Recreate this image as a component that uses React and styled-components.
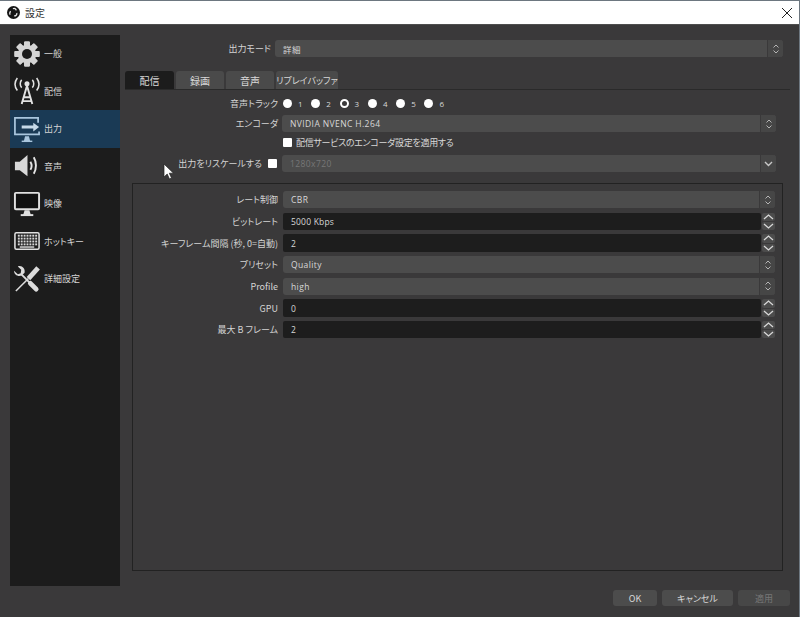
import styled, { createGlobalStyle } from 'styled-components';

const GlobalStyle = createGlobalStyle`
  html, body {
    margin: 0;
    padding: 0;
    background: #3a393a;
  }
  * {
    box-sizing: border-box;
  }
`;

const Window = styled.div`
  position: relative;
  width: 800px;
  height: 617px;
  display: flex;
  flex-direction: column;
  overflow: hidden;
  background: #3a393a;
  border-top: 1px solid #6d7780;
  border-right: 1px solid #6d7780;
  color: #d8d8d8;
  font-family: "Noto Sans CJK JP", "Open Sans", sans-serif;
  font-size: 9px;
  font-feature-settings: "palt";
`;

const TitleBar = styled.div`
  height: 24px;
  flex: none;
  display: flex;
  align-items: center;
  padding: 0 6px 0 7px;
  background: #ffffff;
  border-bottom: 1px solid #4e4e4e;
  color: #333333;
  font-size: 10px;
  gap: 5px;
`;

const TitleText = styled.span`
  flex: 1;
`;

const Body = styled.div`
  flex: 1;
  display: flex;
  padding: 10px 9px 10px 10px;
  gap: 5px;
`;

const Sidebar = styled.nav`
  width: 110px;
  height: 551px;
  flex: none;
  background: #1c1c1c;
`;

const NavItem = styled.div`
  height: 37.5px;
  display: flex;
  align-items: center;
  gap: 3px;
  padding-left: 3px;
  background: ${(p) => (p.$active ? '#1a3a55' : 'transparent')};
  color: #d4d4d4;
  font-size: 9px;
`;

const NavIcon = styled.svg`
  width: 28px;
  height: 28px;
  flex: none;
`;

const ModeRow = styled.div`
  display: flex;
  align-items: center;
  height: 17px;
  margin-top: 5px;
  padding-right: 7px;
`;

const Main = styled.div`
  flex: 1;
  display: flex;
  flex-direction: column;
  min-width: 0;
`;

const TabBar = styled.div`
  display: flex;
  align-items: flex-end;
  gap: 2px;
  height: 18px;
  margin-top: 14px;
  flex: none;
`;

const Tab = styled.div`
  width: ${(p) => p.$w}px;
  height: 18px;
  display: flex;
  align-items: center;
  justify-content: center;
  border-radius: 3px 3px 0 0;
  background: ${(p) => (p.$active ? '#1c1c1c' : '#4a4a4a')};
  color: #d8d8d8;
  font-size: ${(p) => p.$fs || 10}px;
  white-space: nowrap;
`;

const TabLine = styled.div`
  height: 1px;
  background: #2a2a2a;
  flex: none;
`;

const TopForm = styled.div`
  display: flex;
  flex-direction: column;
  padding: 6px 14px 0 0;
`;

const Row = styled.div`
  display: flex;
  align-items: center;
  height: ${(p) => p.$h || 17}px;
  margin-top: ${(p) => p.$mt || 0}px;
`;

const Label = styled.div`
  width: ${(p) => p.$w || 153}px;
  flex: none;
  display: flex;
  align-items: center;
  justify-content: flex-end;
  gap: 6px;
  margin-right: 4px;
  padding-right: ${(p) => p.$pr || 0}px;
  color: #d4d4d4;
  font-size: 9px;
  white-space: nowrap;
`;

const Radios = styled.div`
  display: flex;
  align-items: center;
  padding-left: 1px;
`;

const RadioItem = styled.label`
  width: 28.3px;
  display: flex;
  align-items: center;
  gap: 6px;
  font-family: "Open Sans", sans-serif;
  font-size: 8px;
`;

const RadioDot = styled.span`
  width: 9px;
  height: 9px;
  border-radius: 50%;
  background: ${(p) => (p.$on ? '#3a393a' : '#ffffff')};
  border: ${(p) => (p.$on ? '2px solid #ffffff' : 'none')};
`;

const Check = styled.span`
  width: 9px;
  height: 9px;
  flex: none;
  background: #ffffff;
  border-radius: 1px;
`;

const CheckText = styled.div`
  display: flex;
  align-items: center;
  gap: 4px;
  padding-left: 1px;
  font-size: 9px;
  letter-spacing: -0.3px;
`;

const Combo = styled.div`
  flex: ${(p) => (p.$w ? 'none' : 1)};
  width: ${(p) => (p.$w ? `${p.$w}px` : 'auto')};
  height: 17px;
  display: flex;
  border-radius: 3px;
  overflow: hidden;
  background: #4c4c4c;
  color: ${(p) => (p.$disabled ? '#777777' : '#d8d8d8')};
`;

const ComboText = styled.div`
  flex: 1;
  display: flex;
  align-items: center;
  padding-left: 8px;
  font-family: "Open Sans", "Noto Sans CJK JP", sans-serif;
  font-size: 8.5px;
  letter-spacing: 0.4px;
`;

const ComboArrow = styled.div`
  width: 16px;
  flex: none;
  display: flex;
  align-items: center;
  justify-content: center;
  background: #464646;
  border-left: 1px solid #3a393a;
`;

const Group = styled.div`
  width: 651px;
  height: 388px;
  margin: 11px 0 0 7px;
  padding: 7px 7px 0 0;
  display: flex;
  flex-direction: column;
  gap: 4.17px;
  border: 1px solid #222222;
`;

const GroupLabel = styled(Label)`
  width: 145px;
  margin-right: 5px;
`;

const Spin = styled.div`
  flex: 1;
  height: 17.5px;
  display: flex;
  gap: 1px;
`;

const SpinInput = styled.div`
  flex: 1;
  display: flex;
  align-items: center;
  padding-left: 8px;
  border-radius: 2px;
  background: #1d1d1d;
  color: #d8d8d8;
  font-family: "Open Sans", sans-serif;
  font-size: 8.5px;
  letter-spacing: 0.2px;
`;

const SpinButtons = styled.div`
  width: 13px;
  flex: none;
  display: flex;
  flex-direction: column;
  gap: 1px;
`;

const SpinButton = styled.div`
  flex: 1;
  display: flex;
  align-items: center;
  justify-content: center;
  background: #4c4c4c;
  border-radius: 2px;
`;

const Footer = styled.div`
  display: flex;
  justify-content: flex-end;
  gap: 5px;
  height: 16px;
  margin-top: 19px;
`;

const Button = styled.div`
  width: ${(p) => p.$w}px;
  display: flex;
  align-items: center;
  justify-content: center;
  border-radius: 3px;
  background: ${(p) => (p.$disabled ? '#474747' : '#4c4c4c')};
  color: ${(p) => (p.$disabled ? '#777777' : '#d8d8d8')};
  font-size: 9px;
`;

const Cursor = styled.svg`
  position: absolute;
  left: 163px;
  top: 162px;
  width: 12px;
  height: 17px;
`;

const UpDown = () => (
  <svg width="8" height="12" viewBox="0 0 8 12" fill="none" stroke="#b5b5b5" strokeWidth="1">
    <path d="M1.5 4.5 4 2l2.5 2.5M1.5 7.5 4 10l2.5-2.5" />
  </svg>
);

const DownOnly = () => (
  <svg width="9" height="6" viewBox="0 0 9 6" fill="none" stroke="#c8c8c8" strokeWidth="1.4">
    <path d="M1 1l3.5 3.5L8 1" />
  </svg>
);

const Chevron = ({ up }) => (
  <svg width="11" height="6" viewBox="0 0 11 6" fill="none" stroke="#d8d8d8" strokeWidth="1.3">
    <path d={up ? 'M1 5l4.5-4L10 5' : 'M1 1l4.5 4L10 1'} />
  </svg>
);

const ObsLogo = () => (
  <svg width="13" height="13" viewBox="0 0 24 24">
    <circle cx="12" cy="12" r="12" fill="#151515" />
    <g fill="none" stroke="#e8e8e8" strokeWidth="2.4">
      <path d="M11 5a4 4 0 0 1 6 3" />
      <path d="M18 13a4 4 0 0 1-5 5" />
      <path d="M6 16a4 4 0 0 1 1-6" />
    </g>
  </svg>
);

const GearIcon = () => (
  <NavIcon viewBox="0 0 29 29">
    <g fill="#d4d4d4">
      {[0, 45, 90, 135, 180, 225, 270, 315].map((a) => (
        <rect key={a} x="11.5" y="1.5" width="6" height="26" rx="1" transform={`rotate(${a} 14.5 14.5)`} />
      ))}
      <circle cx="14.5" cy="14.5" r="9.5" />
    </g>
    <circle cx="14.5" cy="14.5" r="5.2" fill="#1c1c1c" />
  </NavIcon>
);

const AntennaIcon = () => (
  <NavIcon viewBox="0 0 29 29">
    <g fill="none" stroke="#e2e2e2" strokeWidth="1.6">
      <path d="M9 3c-2 2-2 6 0 8M20 3c2 2 2 6 0 8" />
      <path d="M4.500 1c-3 4-3 9 0 13M24.500 1c3 4 3 9 0 13" />
      <path d="M14.500 9 9 28M14.500 9 20 28M11 21h7M10 25h9" strokeWidth="2" />
    </g>
    <circle cx="14.500" cy="7" r="2.600" fill="#e2e2e2" />
  </NavIcon>
);

const OutputIcon = () => (
  <NavIcon viewBox="0 0 29 29">
    <path d="M26 8V3H2v17h25v-3" fill="none" stroke="#a9c6de" strokeWidth="1.800" />
    <path d="M11 28l1.500-6h4l1.500 6z" fill="#a9c6de" />
    <rect x="9" y="26.500" width="11" height="1.500" fill="#a9c6de" />
    <path d="M9 11h12V8l6 4.500-6 4.500v-3H9z" fill="#c6d9e8" />
  </NavIcon>
);

const SpeakerIcon = () => (
  <NavIcon viewBox="0 0 29 29">
    <path d="M2 10h5l8-7v22l-8-6H2z" fill="#d8d8d8" />
    <g fill="none" stroke="#e4e4e4" strokeWidth="2">
      <path d="M18 10c1.500 2.500 1.500 6 0 8.500" />
      <path d="M21.500 5.500c3 5 3 12 0 17" />
    </g>
  </NavIcon>
);

const MonitorIcon = () => (
  <NavIcon viewBox="0 0 29 29">
    <rect x="2" y="3" width="25" height="17" rx="1" fill="#111111" stroke="#e0e0e0" strokeWidth="2" />
    <path d="M12 21h5l1.500 5h-8z" fill="#e0e0e0" />
    <rect x="8" y="25" width="13" height="2" fill="#e0e0e0" />
  </NavIcon>
);

const KeyboardIcon = () => (
  <NavIcon viewBox="0 0 29 29">
    <rect x="2" y="6" width="25" height="17" rx="1.500" fill="none" stroke="#e0e0e0" strokeWidth="1.600" />
    <g fill="#d8d8d8">
      {[8, 11, 14, 17].map((y) =>
        [5, 8, 11, 14, 17, 20, 23].map((x) => <rect key={`${x}-${y}`} x={x} y={y} width="2" height="2" />)
      )}
      <rect x="7" y="20" width="15" height="1.500" />
    </g>
  </NavIcon>
);

const ToolsIcon = () => (
  <NavIcon viewBox="0 0 29 29">
    <g stroke="#dcdcdc" fill="none">
      <path d="M26 3 16 14" strokeWidth="5" />
      <path d="M16 14 3 27" strokeWidth="1.600" />
      <path d="M9 10 18 19" strokeWidth="2" />
      <path d="M18 19 24 25" strokeWidth="5" strokeLinecap="round" />
    </g>
    <path d="M1 6l4 3.500 3-1 .5-3.500L5 1.500c4-1.500 8 2 7 6.500l-3 3C5 12.500 1 10 1 6z" fill="#dcdcdc" />
  </NavIcon>
);

const navItems = [
  { label: '一般', Icon: GearIcon },
  { label: '配信', Icon: AntennaIcon },
  { label: '出力', Icon: OutputIcon, active: true },
  { label: '音声', Icon: SpeakerIcon },
  { label: '映像', Icon: MonitorIcon },
  { label: 'ホットキー', Icon: KeyboardIcon },
  { label: '詳細設定', Icon: ToolsIcon },
];

const tabs = [
  { label: '配信', w: 49, active: true },
  { label: '録画', w: 48 },
  { label: '音声', w: 48 },
  { label: 'リプレイバッファ', w: 62, fs: 9 },
];

const streamRows = [
  { label: 'レート制御', value: 'CBR', type: 'combo' },
  { label: 'ビットレート', value: '5000 Kbps', type: 'spin' },
  { label: 'キーフレーム間隔 (秒, 0=自動)', value: '2', type: 'spin' },
  { label: 'プリセット', value: 'Quality', type: 'combo' },
  { label: 'Profile', value: 'high', type: 'combo' },
  { label: 'GPU', value: '0', type: 'spin' },
  { label: '最大 B フレーム', value: '2', type: 'spin' },
];

const ComboBox = ({ value, disabled, arrow, w }) => (
  <Combo $disabled={disabled} $w={w}>
    <ComboText>{value}</ComboText>
    <ComboArrow>{arrow || <UpDown />}</ComboArrow>
  </Combo>
);

const SpinBox = ({ value }) => (
  <Spin>
    <SpinInput>{value}</SpinInput>
    <SpinButtons>
      <SpinButton>
        <Chevron up />
      </SpinButton>
      <SpinButton>
        <Chevron />
      </SpinButton>
    </SpinButtons>
  </Spin>
);

const App = () => {
  return (
    <>
      <GlobalStyle />
      <Window>
        <TitleBar>
          <ObsLogo />
          <TitleText>設定</TitleText>
          <svg width="12" height="12" viewBox="0 0 12 12" stroke="#222222" strokeWidth="1">
            <path d="M1 1l10 10M11 1 1 11" />
          </svg>
        </TitleBar>
        <Body>
          <Sidebar>
            {navItems.map(({ label, Icon, active }) => (
              <NavItem key={label} $active={active}>
                <Icon />
                <span>{label}</span>
              </NavItem>
            ))}
          </Sidebar>
          <Main>
            <ModeRow>
              <Label $w={146}>出力モード</Label>
              <ComboBox value="詳細" w={508} />
            </ModeRow>
            <TabBar>
              {tabs.map((t) => (
                <Tab key={t.label} $w={t.w} $active={t.active} $fs={t.fs}>
                  {t.label}
                </Tab>
              ))}
            </TabBar>
            <TabLine />
            <TopForm>
              <Row $h={15}>
                <Label>音声トラック</Label>
                <Radios>
                  {[1, 2, 3, 4, 5, 6].map((n) => (
                    <RadioItem key={n}>
                      <RadioDot $on={n === 3} />
                      {n}
                    </RadioItem>
                  ))}
                </Radios>
              </Row>
              <Row $mt={4}>
                <Label>エンコーダ</Label>
                <ComboBox value="NVIDIA NVENC H.264" />
              </Row>
              <Row $h={15} $mt={3}>
                <Label />
                <CheckText>
                  <Check />
                  配信サービスのエンコーダ設定を適用する
                </CheckText>
              </Row>
              <Row $mt={5}>
                <Label $pr={1}>
                  出力をリスケールする
                  <Check />
                </Label>
                <ComboBox value="1280x720" disabled arrow={<DownOnly />} />
              </Row>
            </TopForm>
            <Group>
              {streamRows.map((r) => (
                <Row key={r.label} $h={17.5}>
                  <GroupLabel>{r.label}</GroupLabel>
                  {r.type === 'spin' ? <SpinBox value={r.value} /> : <ComboBox value={r.value} />}
                </Row>
              ))}
            </Group>
            <Footer>
              <Button $w={44}>OK</Button>
              <Button $w={71}>キャンセル</Button>
              <Button $w={52} $disabled>
                適用
              </Button>
            </Footer>
          </Main>
        </Body>
        <Cursor viewBox="0 0 12 17">
          <path d="M1 1v13l3.200-3 2.300 5 2-1-2.200-4.800H10.500z" fill="#ffffff" stroke="#222222" strokeWidth="0.700" />
        </Cursor>
      </Window>
    </>
  );
};

export default App;
